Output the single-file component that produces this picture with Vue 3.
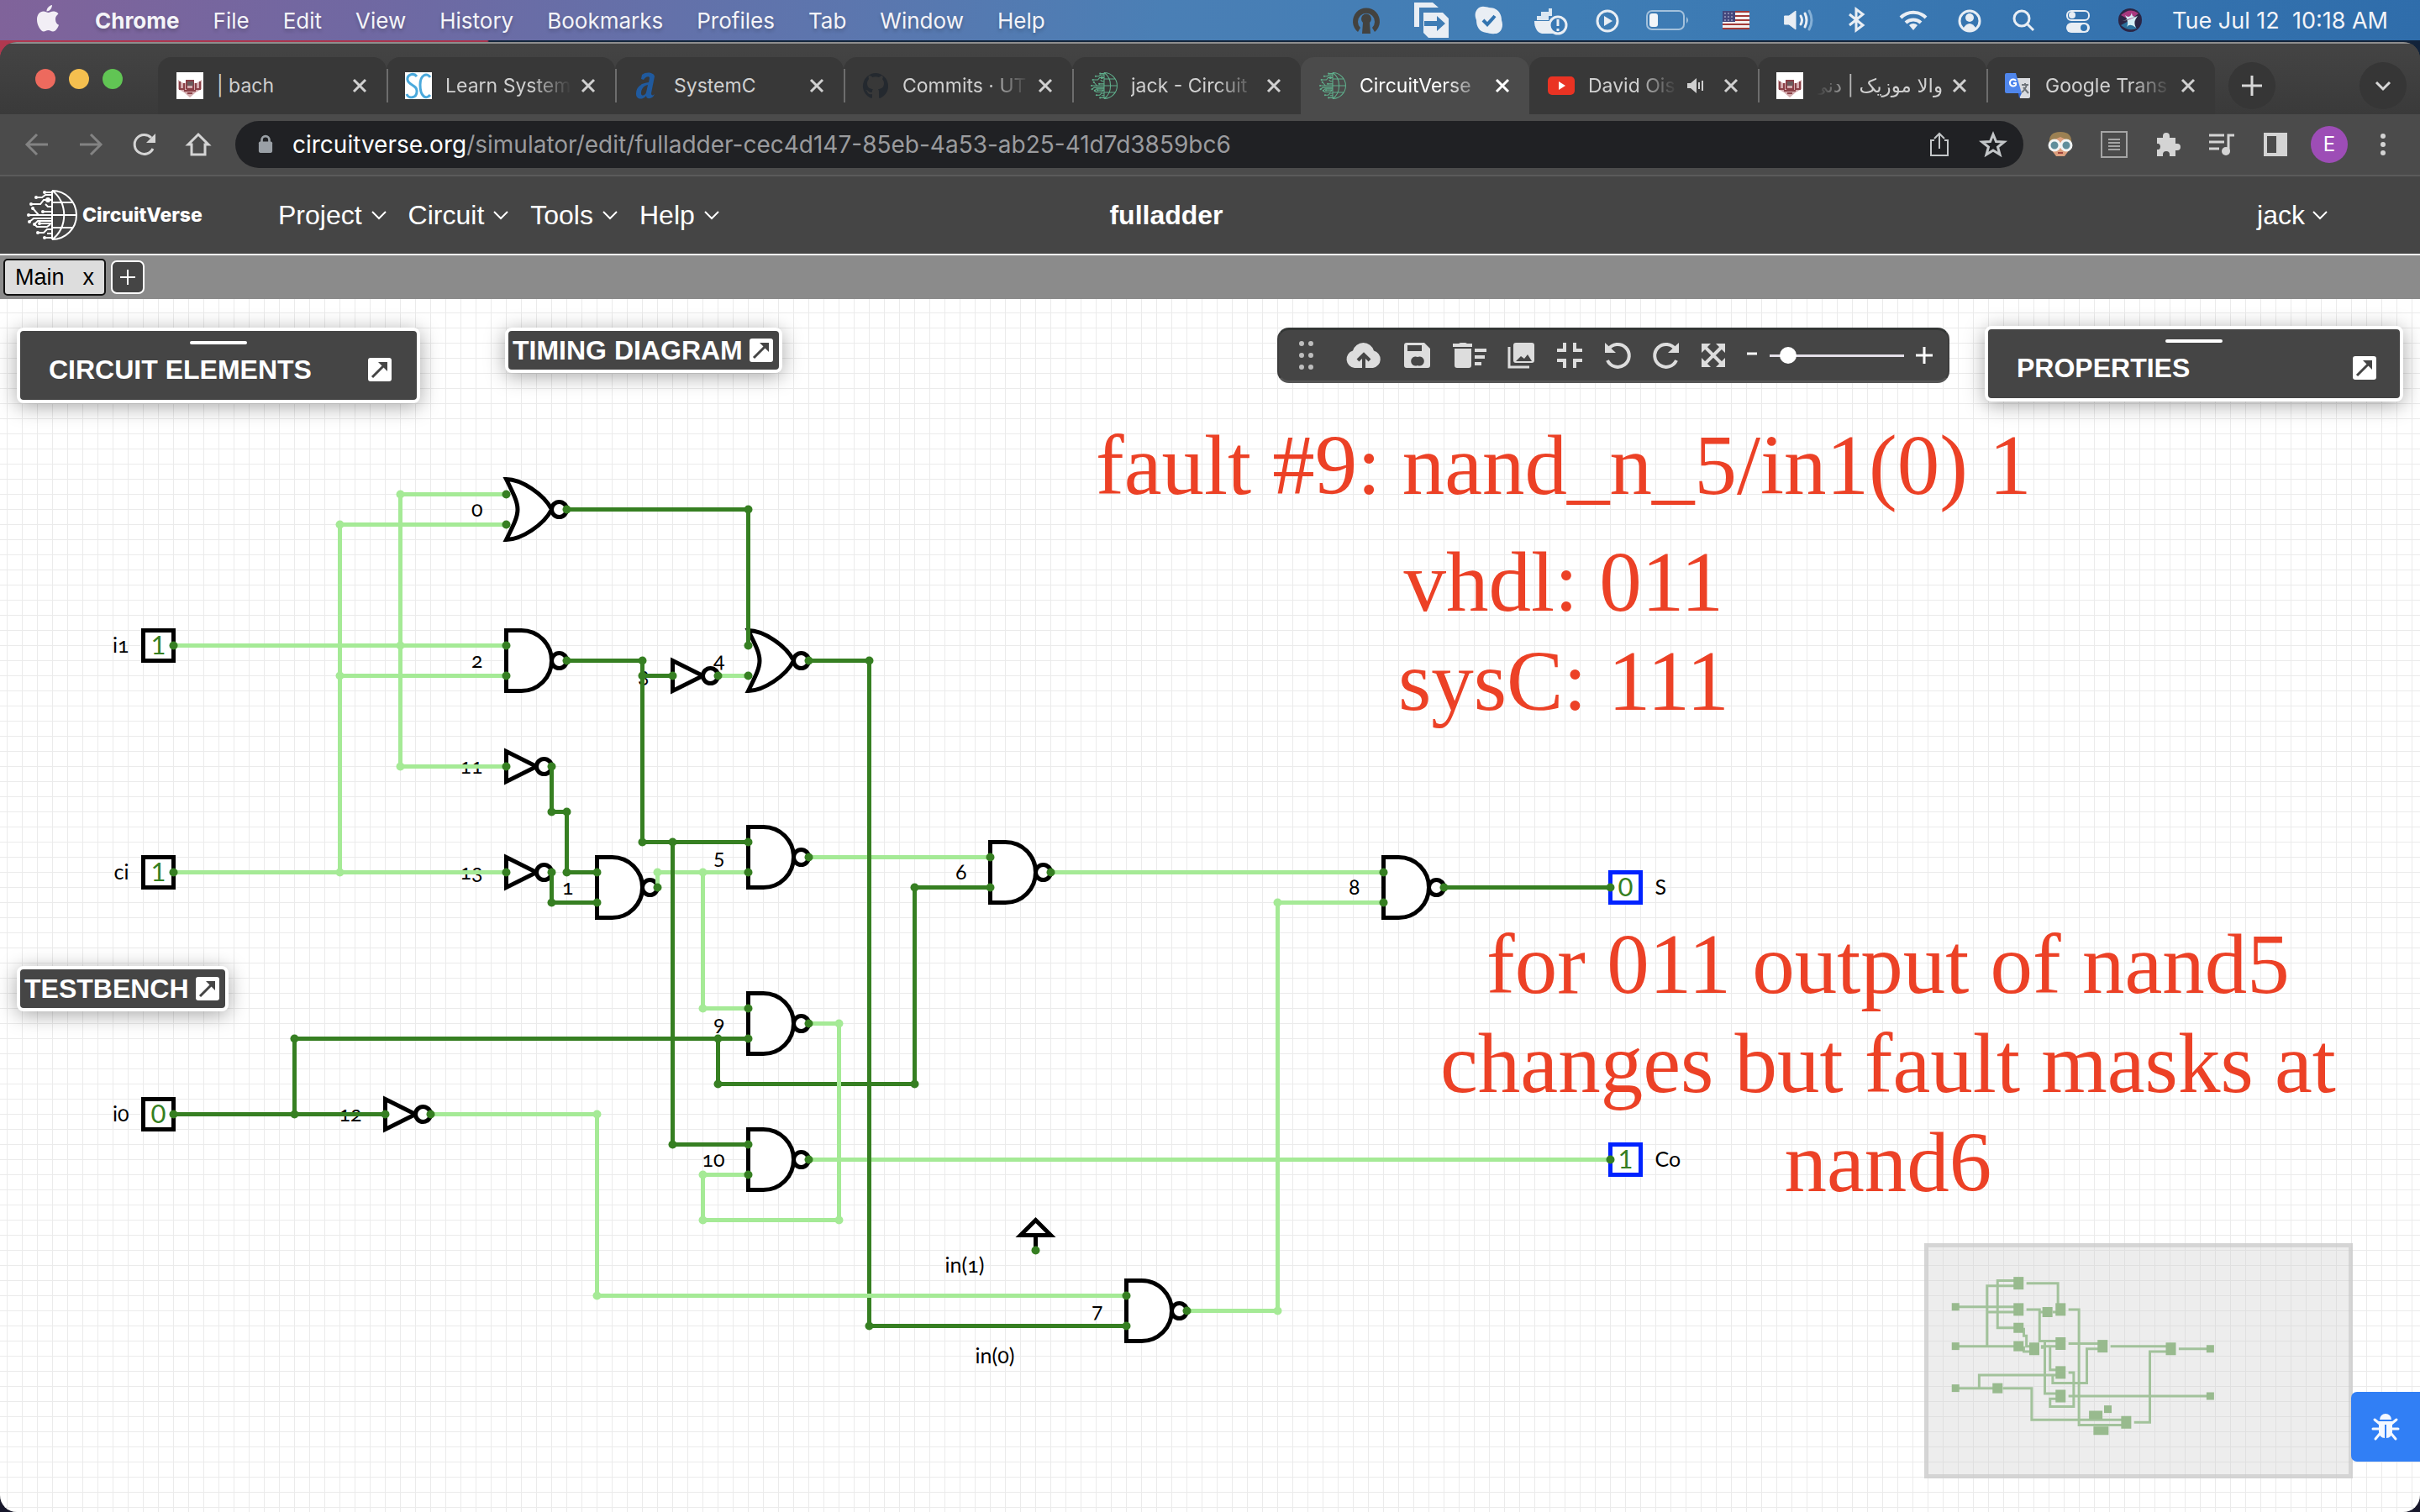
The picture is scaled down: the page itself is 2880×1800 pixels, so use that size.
<script setup>
const STEP = 18

const menus = ['File', 'Edit', 'View', 'History', 'Bookmarks', 'Profiles', 'Tab', 'Window', 'Help']

const tabs = [
  { title: '| bach', icon: 'bach' },
  { title: 'Learn System', icon: 'sc', line: true, fade: true },
  { title: 'SystemC', icon: 'a', line: true },
  { title: 'Commits · UT', icon: 'github', line: true, fade: true },
  { title: 'jack - Circuit', icon: 'globe', line: true, fade: true },
  { title: 'CircuitVerse', icon: 'globe', active: true, fade: true },
  { title: 'David Ois', icon: 'youtube', audio: true, fade: true },
  { title: 'والا موزیک | دنی', icon: 'bach', rtl: true, line: true, fade: true },
  { title: 'Google Trans', icon: 'translate', line: true, fade: true },
]

const nav = ['Project', 'Circuit', 'Tools', 'Help']

// All circuit coordinates are grid cells; x is the column of the input pins.
const gates = [
  { kind: 'nor', x: 33, y: 13, label: '0' },
  { kind: 'nand', x: 33, y: 23, label: '2' },
  { kind: 'not', x: 44, y: 24, label: '3' },
  { kind: 'nor', x: 49, y: 23, label: '4' },
  { kind: 'not', x: 33, y: 30, label: '11' },
  { kind: 'not', x: 33, y: 37, label: '13' },
  { kind: 'nand', x: 39, y: 38, label: '1' },
  { kind: 'nand', x: 49, y: 36, label: '5' },
  { kind: 'nand', x: 65, y: 37, label: '6' },
  { kind: 'nand', x: 91, y: 38, label: '8' },
  { kind: 'nand', x: 49, y: 47, label: '9' },
  { kind: 'not', x: 25, y: 53, label: '12' },
  { kind: 'nand', x: 49, y: 56, label: '10' },
  { kind: 'nand', x: 74, y: 66, label: '7' },
]

const shapes = {
  nor: 'M0-36C18-36 45-18 54 0C45 18 18 36 0 36C18 0 18 0 0-36Z',
  nand: 'M0-36H18A36 36 0 0 1 18 36H0Z',
  not: 'M0-18L36 0L0 18Z',
}

const pins = [
  { x: 10, y: 22, value: '1', name: 'i1' },
  { x: 10, y: 37, value: '1', name: 'ci' },
  { x: 10, y: 53, value: '0', name: 'i0' },
  { x: 107, y: 38, value: '0', name: 'S', out: true },
  { x: 107, y: 56, value: '1', name: 'Co', out: true },
]

const notes = [
  { x: 62, y: 63, text: 'in(1)', cx: 63, w: 16 },
  { x: 64, y: 69, text: 'in(0)', cx: 65, w: 18 },
]

const wires = [
  { on: true, p: [[33, 12], [26, 12], [26, 30], [33, 30]] },
  { on: true, p: [[33, 14], [22, 14], [22, 37]] },
  { on: true, p: [[22, 24], [33, 24]] },
  { on: true, p: [[11, 22], [33, 22]] },
  { on: true, p: [[11, 37], [33, 37]] },
  { on: true, p: [[47, 24], [49, 24]] },
  { on: true, p: [[43, 38], [43, 37], [49, 37]] },
  { on: true, p: [[46, 37], [46, 46], [49, 46]] },
  { on: true, p: [[53, 36], [65, 36]] },
  { on: true, p: [[53, 56], [106, 56]] },
  { on: true, p: [[69, 37], [91, 37]] },
  { on: true, p: [[78, 66], [84, 66], [84, 39], [91, 39]] },
  { p: [[37, 13], [49, 13], [49, 22]] },
  { p: [[37, 23], [42, 23], [42, 35], [49, 35]] },
  { p: [[42, 24], [44, 24]] },
  { p: [[44, 35], [44, 55], [49, 55]] },
  { p: [[36, 30], [36, 33], [37, 33], [37, 37], [39, 37]] },
  { p: [[36, 37], [36, 39], [39, 39]] },
  { p: [[11, 53], [25, 53]] },
  { p: [[19, 53], [19, 48], [49, 48]] },
  { p: [[47, 48], [47, 51], [60, 51], [60, 38], [65, 38]] },
  { p: [[53, 23], [57, 23], [57, 67], [74, 67]] },
  { p: [[95, 38], [106, 38]] },
  { on: true, p: [[53, 47], [55, 47], [55, 60], [46, 60], [46, 57], [49, 57]] },
  { on: true, p: [[28, 53], [39, 53], [39, 65], [74, 65]] },
]

const joints = [
  ...[[26, 12], [22, 14], [26, 22], [22, 24], [26, 30], [22, 37], [43, 37], [46, 37], [46, 46], [84, 66], [84, 39],
    [55, 47], [55, 60], [46, 60], [46, 57], [39, 53], [39, 65]].map(([x, y]) => ({ x, y, on: true })),
  ...[[49, 13], [42, 23], [42, 24], [42, 35], [44, 35], [44, 55], [36, 33], [37, 33], [37, 37], [36, 39], [19, 53],
    [19, 48], [47, 48], [47, 51], [60, 51], [60, 38], [57, 23], [57, 67], [68, 62]].map(([x, y]) => ({ x, y })),
  ...gates.flatMap((g) =>
    g.kind === 'not'
      ? [{ x: g.x, y: g.y }, { x: g.x + 3, y: g.y }]
      : [{ x: g.x, y: g.y - 1 }, { x: g.x, y: g.y + 1 }, { x: g.x + 4, y: g.y }]),
  ...pins.map((p) => ({ x: p.out ? p.x - 1 : p.x + 1, y: p.y })),
]

const points = (w, s = STEP) => w.p.map(([x, y]) => `${x * s},${y * s}`).join(' ')
const MAP = 3.125
const blocks = [
  ...gates.map((g) => ({ x: g.x + 1, y: g.y, w: 12, h: g.kind === 'not' ? 12 : 15 })),
  ...pins.map((p) => ({ x: p.x, y: p.y, w: 9, h: 9 })),
  ...notes.map((n) => ({ x: n.cx + 0.4, y: n.y + 0.2, w: n.w, h: 10 })),
  { x: 68, y: 61, w: 9, h: 9 },
]
</script>

<template>
  <div class="desktop">
    <svg class="defs" aria-hidden="true">
      <symbol id="globe" viewBox="0 0 60 60">
        <g fill="none" stroke="currentColor" stroke-width="2">
          <path d="M30 1V59M30 1A29 29 0 0 1 30 59M30 1C49 14 49 46 30 59M30 15H54M30 30H59M30 45H54" />
          <path d="M22 3H30M11 9H18L22 6H30M5 17H16L20 12H30M7 22L14 30H30M2 30H14M19 26H30M22 17L25 20H30M3 38L8 34H30M9 41L13 37H30M15 40H30M13 51H20L24 47H30M9 41L12 44H24L28 41M21 57H30M24 52H30" />
        </g>
        <g fill="currentColor">
          <circle cx="21" cy="3" r="2" /><circle cx="11" cy="9" r="2" /><circle cx="5" cy="17" r="2" /><circle cx="7" cy="22" r="2" />
          <circle cx="2" cy="30" r="2" /><circle cx="3" cy="38" r="2" /><circle cx="9" cy="41" r="2" /><circle cx="15" cy="40" r="2" />
          <circle cx="13" cy="51" r="2" /><circle cx="21" cy="57" r="2" /><circle cx="19" cy="26" r="2" /><circle cx="25" cy="12" r="3" />
        </g>
      </symbol>
      <symbol id="expand" viewBox="0 0 28 28">
        <rect width="28" height="28" rx="3" fill="#fff" />
        <path d="M5 23L19 9" stroke="#454545" stroke-width="3" />
        <path d="M12 5H23V16Z" fill="#454545" />
      </symbol>
    </svg>

    <header class="menubar">
      <svg class="apple" width="28" height="34" viewBox="0 0 28 34" fill="#f2eef5">
        <path d="M19 1C19 5 16 8.500 12.500 8.500C12.300 5 15.500 1.500 19 1ZM23 18C23 14 26 12 26.500 11.500C24.500 8.700 21.500 8.500 20.500 8.500C18 8.500 16 10 14.500 10C13 10 11 8.600 8.700 8.600C4.500 8.700 1 12 1 18.500C1 25 5.500 32.500 9 32.500C11 32.500 12 31 14.500 31C17 31 17.800 32.500 20 32.500C23.500 32.500 26.300 27 27 24.700C24.500 23.600 23 21.500 23 18Z" />
      </svg>
      <button class="menu app">Chrome</button>
      <button v-for="m in menus" :key="m" class="menu">{{ m }}</button>
      <div class="status">
        <svg width="60" height="40" viewBox="-30 -20 60 40">
          <path d="M-10 14A16 16 0 1 1 10 14L7 9A10 10 0 1 0-7 9Z" fill="#43423f" />
          <path d="M-4 3A6 6 0 1 1 4 3L5 16H-5Z" fill="#43423f" />
        </svg>
        <svg width="38" height="40" viewBox="-19 -20 38 40">
          <path d="M-20-21H2L9-15H-14V8H-20Z" fill="#e9eef4" />
          <path d="M-9-9H14L21-2V21H-3L-9 15Z" fill="#e9eef4" />
          <path d="M-8 1H7V-5L17 4L7 13V7H-8Z" fill="#3f7db5" />
        </svg>
        <svg width="44" height="40" viewBox="-22 -20 44 40">
          <path d="M-14-13C-10-18-4-16 0-15C10-15 15-8 15 0C18 8 14 16 7 16C2 17 0 15-3 15C-12 14-15 7-15 0C-17-5-17-9-14-13Z" fill="#e9eef4" />
          <path d="M-7 0L-2 5L7-5" stroke="#3274b0" stroke-width="4" fill="none" />
        </svg>
        <svg width="46" height="40" viewBox="-23 -20 46 40">
          <path d="M-19 1H9V10L4 16H-10C-16 15-19 8-19 1Z" fill="#e9eef4" />
          <path d="M-16-5H-2V0H-16ZM-11-10H2V-5H-11ZM-2-14H2V-10H-2Z" fill="#dbe7f2" />
          <circle cx="9" cy="6" r="10" fill="#3a79b4" stroke="#e9eef4" stroke-width="3" />
          <path d="M9-1V7M9 10V13" stroke="#e9eef4" stroke-width="3" />
        </svg>
        <svg width="34" height="40" viewBox="-17 -20 34 40">
          <circle r="12" cy="1" fill="none" stroke="#e9eef4" stroke-width="3" /><path d="M-4-5L6 1L-4 7Z" fill="#e9eef4" />
        </svg>
        <svg width="54" height="40" viewBox="-27 -20 54 40">
          <rect x="-25" y="-11" width="44" height="22" rx="6" fill="none" stroke="#a3c1dc" stroke-width="2" />
          <rect x="-22" y="-8" width="10" height="16" rx="3" fill="#f2f5f8" /><path d="M22-4Q26 0 22 4Z" fill="#a3c1dc" />
        </svg>
        <svg width="52" height="40" viewBox="-26 -20 52 40">
          <rect x="-16" y="-11" width="32" height="22" fill="#f4f1f0" />
          <path d="M-16-10H16M-16-5H16M-16 0H16M-16 5H16M-16 10H16" stroke="#a13a38" stroke-width="2" />
          <rect x="-16" y="-11" width="15" height="13" fill="#44477c" />
          <path d="M-14-8H-2M-14-4H-2M-14 0H-2" stroke="#c8cbe0" stroke-dasharray="2 2" />
        </svg>
        <svg width="42" height="40" viewBox="-21 -20 42 40" fill="none" stroke-width="3" stroke-linecap="round">
          <path d="M-17-5H-12L-4-11V11L-12 5H-17Z" fill="#e9eef4" stroke="#e9eef4" stroke-width="1" />
          <path d="M2-5Q5 0 2 5M7-8Q11 0 7 8" stroke="#e9eef4" /><path d="M12-11Q18 0 12 11" stroke="#85b0d6" />
        </svg>
        <svg width="38" height="40" viewBox="-19 -20 38 40" fill="none" stroke="#e9eef4" stroke-width="3">
          <path d="M-8-7L8 6L0 12V-13L8-7L-8 6" />
        </svg>
        <svg width="42" height="40" viewBox="-21 -20 42 40" fill="none" stroke="#e9eef4" stroke-width="4">
          <path d="M-15-3A21 21 0 0 1 15-3M-9 3A13 13 0 0 1 9 3" /><path d="M-5 6A7 7 0 0 1 5 6L0 12Z" fill="#e9eef4" stroke="none" />
        </svg>
        <svg width="36" height="40" viewBox="-18 -20 36 40">
          <circle r="12" cy="1" fill="none" stroke="#e9eef4" stroke-width="3" /><circle r="5" cy="-3" fill="#e9eef4" />
          <path d="M-8 10Q0-2 8 10Q0 15-8 10Z" fill="#e9eef4" />
        </svg>
        <svg width="36" height="40" viewBox="-18 -20 36 40" fill="none" stroke="#e9eef4" stroke-width="3">
          <circle r="9" cx="-2" cy="-2" /><path d="M5 5L12 12" />
        </svg>
        <svg width="38" height="40" viewBox="-19 -20 38 40">
          <rect x="-13" y="-11" width="26" height="11" rx="5" fill="none" stroke="#e9eef4" stroke-width="2" /><circle cx="-7" cy="-6" r="4" fill="#e9eef4" />
          <rect x="-14" y="3" width="28" height="12" rx="6" fill="#e9eef4" /><circle cx="7" cy="9" r="4" fill="#3274b0" />
        </svg>
        <svg width="30" height="40" viewBox="-15 -20 30 40">
          <circle r="14" fill="#2b2545" /><path d="M-11-6Q0-16 10-8L0 0Z" fill="#a8377f" /><path d="M-11 6Q-2 14 8 10L0 0Z" fill="#2a6f9c" />
          <path d="M-9 1Q0 0 9-5Q3 2 7 9Q0 3-4 8Q-1 2-6-6Q0-1 2-9Q2-2 9-5" fill="#d5eef5" />
        </svg>
      </div>
      <time class="clock">Tue Jul 12&nbsp; 10:18 AM</time>
    </header>

    <div class="window">
      <div class="tabstrip">
        <div class="lights"><i class="red"></i><i class="yellow"></i><i class="green"></i></div>
        <div v-for="(t, i) in tabs" :key="i" class="tab" :class="{ active: t.active, line: t.line }">
          <svg width="32" height="32" viewBox="0 0 32 32" :class="['fav', t.icon]">
            <use v-if="t.icon === 'globe'" href="#globe" />
            <g v-else-if="t.icon === 'bach'">
              <rect width="32" height="32" fill="#fff" /><path d="M2 9L8 13H24L30 9V20L23 24L16 30L9 24L2 20Z" fill="#d3abae" />
              <path d="M4 11V20H9V13M12 20V10H20V20H12M28 11V20H23V13M9 22H23M13 25H19" fill="none" stroke="#8a4047" stroke-width="2" />
              <rect x="13" y="11" width="7" height="5" fill="#6b5a5c" />
            </g>
            <g v-else-if="t.icon === 'sc'" fill="none" stroke="#4aa9dc" stroke-width="3">
              <rect width="32" height="32" fill="#fff" stroke="none" /><path d="M14 5C10 0 2 3 3 9C4 16 15 15 14 23C14 31 4 32 2 26M30 6C26 0 18 3 18 15C18 29 25 33 30 27" />
            </g>
            <path v-else-if="t.icon === 'a'" d="M10 3C15-1 24 0 25 5L21 25C21 28 23 28 25 26C23 32 15 33 15 28C10 34 3 32 3 26C3 17 9 13 18 12L19 7C19 4 14 5 12 9L9 8ZM17 15C12 16 9 20 9 25C9 29 14 28 15 24Z" fill="#205a9e" />
            <path v-else-if="t.icon === 'github'" d="M16 1A15.500 15.500 0 0 0 11 31C12 31 12 30 12 29V26C8 27 7 25 6 23C5 21 3 21 5 21C7 21 8 24 10 24C11 24 12 24 12 23C12 22 12 21 13 20C9 20 6 18 6 13C6 11 7 9 8 8C7 6 8 4 8 4C10 4 12 5 12 6C15 5 17 5 20 6C21 5 23 4 24 4C25 6 25 7 24 8C25 9 26 11 26 13C26 18 23 20 19 20C20 21 20 23 20 24V29C20 30 20 31 21 31A15.500 15.500 0 0 0 16 1Z" fill="#24292f" />
            <g v-else-if="t.icon === 'youtube'"><rect y="5" width="32" height="22" rx="5" fill="#ea3323" /><path d="M13 11L21 16L13 21Z" fill="#fff" /></g>
            <g v-else><path d="M13 7H30V29Q30 31 28 31H18Z" fill="#dadce0" /><path d="M0 3Q0 1 2 1H13L20 25H2Q0 25 0 23Z" fill="#4f86ec" /><path d="M16 25H20L17 31Z" fill="#3367d6" />
              <path d="M13 10A4 4 0 1 0 13 15V13H10" stroke="#fff" stroke-width="2" fill="none" /><path d="M20 15H28M24 13V15M26 15Q24 21 20 24M22 18L28 25" stroke="#70757a" stroke-width="2" fill="none" /></g>
          </svg>
          <span class="title" :class="{ fade: t.fade }" :dir="t.rtl ? 'rtl' : 'ltr'">{{ t.title }}</span>
          <svg v-if="t.audio" class="audio" width="20" height="20" viewBox="0 0 20 20" fill="#d0d0d0"><path d="M0 7H4L11 1V19L4 13H0ZM13 6H15V14H13ZM17 4H19V16H17Z" /></svg>
          <button class="x" aria-label="Close tab"><svg width="16" height="16" viewBox="0 0 16 16"><path d="M1 1L15 15M15 1L1 15" stroke="currentColor" stroke-width="3" /></svg></button>
        </div>
        <button class="round add" aria-label="New tab"><svg width="24" height="24" viewBox="0 0 24 24"><path d="M12 0V24M0 12H24" stroke="#d8d8d8" stroke-width="3" /></svg></button>
        <button class="round search" aria-label="Search tabs"><svg width="18" height="12" viewBox="0 0 18 12"><path d="M1 2L9 10L17 2" fill="none" stroke="#d8d8d8" stroke-width="3" /></svg></button>
      </div>

      <div class="toolbar">
        <button class="tool" aria-label="Back"><svg width="28" height="28" viewBox="0 0 28 28"><path d="M27 14H3M14 2L2 14L14 26" fill="none" stroke="#838383" stroke-width="3" /></svg></button>
        <button class="tool" aria-label="Forward"><svg width="28" height="28" viewBox="0 0 28 28"><path d="M1 14H25M14 2L26 14L14 26" fill="none" stroke="#838383" stroke-width="3" /></svg></button>
        <button class="tool" aria-label="Reload"><svg width="28" height="28" viewBox="0 0 28 28"><path d="M24 19A11.500 11.500 0 1 1 22 6" fill="none" stroke="#d4d4d4" stroke-width="3" /><path d="M27 1V12H16Z" fill="#d4d4d4" /></svg></button>
        <button class="tool" aria-label="Home"><svg width="28" height="28" viewBox="0 0 28 28"><path d="M2 14L14 2L26 14H22V26H6V14Z" fill="none" stroke="#d4d4d4" stroke-width="3" /></svg></button>
        <div class="url">
          <svg width="18" height="24" viewBox="0 0 20 24"><rect x="1" y="8" width="18" height="15" rx="2" fill="#9aa0a6" /><path d="M5 9V6A5 5 0 0 1 15 6V9" fill="none" stroke="#9aa0a6" stroke-width="3" /></svg>
          <a class="address" href="#"><b>circuitverse.org</b>/simulator/edit/fulladder-cec4d147-85eb-4a53-ab25-41d7d3859bc6</a>
          <button class="tool" aria-label="Share"><svg width="28" height="30" viewBox="0 0 28 30" fill="none" stroke="#c4c7c9" stroke-width="2"><path d="M8 10H4V28H24V10H20M14 20V2M8 8L14 2L20 8" /></svg></button>
          <button class="tool" aria-label="Bookmark"><svg width="30" height="30" viewBox="0 0 30 30" fill="none" stroke="#c4c7c9" stroke-width="3"><path d="M15 3L18.500 11.500L28 12L20.500 18L23 27L15 22L7 27L9.500 18L2 12L11.500 11.500Z" /></svg></button>
        </div>
        <button class="tool first" aria-label="Extension"><svg width="30" height="32" viewBox="0 0 30 32"><path d="M2 16Q0 1 15 1Q30 1 28 16Z" fill="#9b8053" /><path d="M4 12L15 7L26 12V22L20 30H10L4 22Z" fill="#dda07e" /><circle cx="8" cy="17" r="6" fill="#5f8e9b" stroke="#f1f4f4" stroke-width="3" /><circle cx="22" cy="17" r="6" fill="#5f8e9b" stroke="#f1f4f4" stroke-width="3" /><path d="M12 26H18" stroke="#a0443c" stroke-width="2" /></svg></button>
        <button class="tool" aria-label="Reader"><svg width="32" height="32" viewBox="0 0 32 32" fill="none" stroke="#a5a5a5" stroke-width="2"><path d="M1 1H31V31H1ZM9 10H23M9 14H23M9 18H23M9 22H23" /></svg></button>
        <button class="tool" aria-label="Extensions"><svg width="30" height="30" viewBox="0 0 30 30" fill="#d4d4d4"><path d="M2 7H9V5A4 4 0 0 1 17 5V7H24V14H26A4 4 0 0 1 26 22H24V29H17V27A4 4 0 0 0 9 27V29H2V21H4A4 4 0 0 0 4 14H2Z" /></svg></button>
        <button class="tool" aria-label="Media"><svg width="30" height="28" viewBox="0 0 30 28"><path d="M0 3H18M0 11H18M0 19H12M23 22V3H30" fill="none" stroke="#d4d4d4" stroke-width="3" /><circle cx="20" cy="22" r="5" fill="#d4d4d4" /></svg></button>
        <button class="tool" aria-label="Side panel"><svg width="28" height="28" viewBox="0 0 28 28"><path d="M0 0H28V28H0ZM4 4V24H15V4Z" fill="#d4d4d4" fill-rule="evenodd" /></svg></button>
        <button class="tool" aria-label="Account"><span class="avatar">E</span></button>
        <button class="tool" aria-label="More"><svg width="6" height="28" viewBox="0 0 6 28" fill="#d4d4d4"><circle cx="3" cy="4" r="3" /><circle cx="3" cy="14" r="3" /><circle cx="3" cy="24" r="3" /></svg></button>
      </div>

      <nav class="appbar">
        <a class="brand" href="#"><svg width="60" height="62"><use href="#globe" /></svg><span>CircuitVerse</span></a>
        <ul class="nav">
          <li v-for="n in nav" :key="n"><button>{{ n }}<svg width="18" height="12" viewBox="0 0 18 12"><path d="M1 2L9 10L17 2" fill="none" stroke="#fff" stroke-width="2" /></svg></button></li>
        </ul>
        <h1>fulladder</h1>
        <button class="user">jack<svg width="18" height="12" viewBox="0 0 18 12"><path d="M1 2L9 10L17 2" fill="none" stroke="#fff" stroke-width="2" /></svg></button>
      </nav>

      <div class="circuits">
        <button class="circuit">Main<span>x</span></button>
        <button class="plus" aria-label="Add circuit"><svg width="18" height="18" viewBox="0 0 18 18"><path d="M9 0V18M0 9H18" stroke="#fff" stroke-width="2" /></svg></button>
      </div>

      <main class="stage">
        <svg class="circuit-canvas">
          <g transform="translate(8.500 16.500)">
            <g class="gates">
              <g v-for="g in gates" :key="g.label" :transform="`translate(${g.x * STEP} ${g.y * STEP})`">
                <path :d="shapes[g.kind]" />
                <circle :cx="g.kind === 'not' ? 45 : 63" r="9" />
                <text x="-28" y="8" class="end">{{ g.label }}</text>
              </g>
              <g v-for="p in pins" :key="p.name" :transform="`translate(${p.x * STEP} ${p.y * STEP})`">
                <rect x="-18" y="-18" width="36" height="36" :class="{ out: p.out }" />
                <text y="10" class="value">{{ p.value }}</text>
                <text :x="p.out ? 35 : -35" y="8" :class="{ end: !p.out }">{{ p.name }}</text>
              </g>
              <text v-for="n in notes" :key="n.text" :x="n.x * STEP" :y="n.y * STEP + 8">{{ n.text }}</text>
              <path d="M1224 1080L1206 1098H1242ZM1224 1098V1116" />
            </g>
            <polyline v-for="(w, i) in wires" :key="i" class="wire" :class="{ on: w.on }" :points="points(w)" />
            <circle v-for="(j, i) in joints" :key="'j' + i" class="joint" :class="{ on: j.on }" :cx="j.x * STEP" :cy="j.y * STEP" r="5" />
          </g>
        </svg>

        <section class="panel elements">
          <i class="grip"></i>
          <h2>CIRCUIT ELEMENTS</h2>
          <button aria-label="Expand circuit elements"><svg width="28" height="28"><use href="#expand" /></svg></button>
        </section>
        <section class="panel small timing">
          <h2>TIMING DIAGRAM</h2>
          <button aria-label="Expand timing diagram"><svg width="28" height="28"><use href="#expand" /></svg></button>
        </section>
        <section class="panel small testbench">
          <h2>TESTBENCH</h2>
          <button aria-label="Expand testbench"><svg width="28" height="28"><use href="#expand" /></svg></button>
        </section>
        <section class="panel properties">
          <i class="grip"></i>
          <h2>PROPERTIES</h2>
          <button aria-label="Expand properties"><svg width="28" height="28"><use href="#expand" /></svg></button>
        </section>

        <div class="quick">
          <svg class="dots" width="16" height="34" viewBox="0 0 16 34" fill="#bdbdbd"><circle cx="3" cy="3" r="3" /><circle cx="14" cy="3" r="3" /><circle cx="3" cy="17" r="3" /><circle cx="14" cy="17" r="3" /><circle cx="3" cy="31" r="3" /><circle cx="14" cy="31" r="3" /></svg>
          <button aria-label="Save online"><svg width="44" height="30" viewBox="0 0 44 30" fill="#ddd"><path d="M11 30A10.500 10.500 0 0 1 9 9.500A13 13 0 0 1 34 9.500A10.500 10.500 0 0 1 33 30Z" /><path d="M22 30V15M15 21L22 14L29 21" fill="none" stroke="#454545" stroke-width="4" /></svg></button>
          <button aria-label="Save offline"><svg width="32" height="30" viewBox="0 0 32 30"><path d="M3 0H24L31 7V27Q31 30 28 30H3Q0 30 0 27V3Q0 0 3 0ZM4 3V10H21V3ZM16 17A5.500 5.500 0 1 0 16 27A5.500 5.500 0 1 0 16 17Z" fill="#ddd" fill-rule="evenodd" /></svg></button>
          <button aria-label="Delete selected"><svg width="40" height="30" viewBox="0 0 40 30" fill="#ddd"><path d="M0 1H7L9 0H15L17 1H23V5H0ZM2 7H22V27Q22 30 19 30H5Q2 30 2 27ZM26 7H40V11H26ZM26 15H38V19H26ZM26 23H34V27H26Z" /></svg></button>
          <button aria-label="Download image"><svg width="32" height="30" viewBox="0 0 32 30" fill="#ddd"><path d="M9 0H28Q31 0 31 3V21Q31 24 28 24H9Q6 24 6 21V3Q6 0 9 0ZM9 22H28L23 14L19 19L15 16Z" fill-rule="evenodd" /><path d="M1 5V29H25" fill="none" stroke="#ddd" stroke-width="3" /></svg></button>
          <button aria-label="Fit to screen"><svg width="30" height="30" viewBox="0 0 30 30"><path d="M9 0V9H0M21 0V9H30M9 30V21H0M21 30V21H30" fill="none" stroke="#ddd" stroke-width="4" /></svg></button>
          <button aria-label="Undo"><svg width="32" height="32" viewBox="0 0 32 32"><path d="M5 9A13.500 13.500 0 1 1 4 22" fill="none" stroke="#ddd" stroke-width="4" /><path d="M1 1V13H14Z" fill="#ddd" /></svg></button>
          <button aria-label="Redo"><svg width="32" height="32" viewBox="0 0 32 32"><path d="M27 9A13.500 13.500 0 1 0 28 22" fill="none" stroke="#ddd" stroke-width="4" /><path d="M31 1V13H18Z" fill="#ddd" /></svg></button>
          <button aria-label="Full view"><svg width="28" height="28" viewBox="0 0 28 28" fill="#ddd"><path d="M3 3L25 25M25 3L3 25" stroke="#ddd" stroke-width="4" /><path d="M0 0H11L0 11ZM28 0H17L28 11ZM0 28H11L0 17ZM28 28H17L28 17Z" /></svg></button>
          <div class="zoom">
            <button class="minus" aria-label="Zoom out"><svg width="12" height="20" viewBox="0 0 12 20"><path d="M0 8H12" stroke="#fff" stroke-width="3" /></svg></button>
            <input type="range" min="0" max="100" value="9" aria-label="Zoom" />
            <button aria-label="Zoom in"><svg width="20" height="20" viewBox="0 0 20 20"><path d="M10 0V20M0 10H20" stroke="#fff" stroke-width="3" /></svg></button>
          </div>
        </div>

        <div class="remark top"><p class="gap">fault #9: nand_n_5/in1(0) 1</p><p>vhdl: 011</p><p>sysC: 111</p></div>
        <div class="remark low"><p>for 011 output of nand5</p><p>changes but fault masks at</p><p>nand6</p></div>

        <svg class="minimap" width="510" height="280">
          <g transform="translate(1 2)">
            <polyline v-for="(w, i) in wires" :key="i" :points="points(w, MAP)" />
            <rect v-for="(b, i) in blocks" :key="'b' + i" :x="b.x * MAP - b.w / 2" :y="b.y * MAP - b.h / 2" :width="b.w" :height="b.h" />
          </g>
        </svg>
        <button class="bug" aria-label="Report issue">
          <svg width="32" height="32" viewBox="0 0 32 32" fill="#f4f8ff"><path d="M9 7A7 7 0 0 1 23 7Z" /><path d="M8 9H24V22Q23 29 17 29V13H15V29Q9 29 8 22Z" /><path d="M9 12L3 7M9 18H1M9 24L4 30M23 12L29 7M23 18H31M23 24L28 30" stroke="#f4f8ff" stroke-width="3" stroke-linecap="round" /></svg>
        </button>
      </main>
    </div>
  </div>
</template>

<style>
body {
  margin: 0;
  background: #17172b;
}
</style>

<style scoped>
* {
  box-sizing: border-box;
}
button {
  display: flex;
  align-items: center;
  padding: 0;
  border: 0;
  background: none;
  color: inherit;
  font: inherit;
}
svg {
  flex: none;
  display: block;
  overflow: visible;
}
.defs {
  position: absolute;
  width: 0;
  height: 0;
}
.desktop {
  display: flex;
  flex-direction: column;
  min-height: 100vh;
  font-family: Inter, "Liberation Sans", sans-serif;
  background: linear-gradient(90deg, #b0384f 0, #a8344c 580px, #14263c 582px, #12233a 100%) 0 0 / 100% 80px no-repeat, #17172b;
}
.menubar {
  display: flex;
  align-items: center;
  height: 48px;
  padding: 0 38px 0 43px;
  font-size: 26px;
  color: #f4f4f8;
  background: linear-gradient(100deg, #80639a 0, #7068a2 15%, #5c76ae 35%, #4a7fb5 48%, #3f7db5 65%, #2f6dab 100%);
}
.apple {
  margin-right: 42px;
  margin-bottom: 4px;
}
.menu {
  margin-right: 40px;
  text-shadow: 0 3px 4px #0003;
}
.app {
  font-weight: 700;
}
.status {
  display: flex;
  gap: 28px;
  margin-left: auto;
}
.clock {
  width: 260px;
  margin-left: 32px;
  font-size: 27px;
  text-align: right;
  white-space: nowrap;
}
.window {
  display: flex;
  flex-direction: column;
  flex: 1;
  margin-top: 2px;
  border-radius: 20px;
  overflow: hidden;
  background: #454545;
}
.tabstrip {
  display: flex;
  align-items: flex-end;
  height: 86px;
  border-top: 2px solid #8e8e8e;
  background: linear-gradient(#444, #3a3a3a);
}
.lights {
  display: flex;
  gap: 16px;
  width: 188px;
  padding: 0 0 30px 42px;
}
.lights i {
  width: 24px;
  height: 24px;
  border-radius: 50%;
}
.red { background: #ed6a5e; }
.yellow { background: #f5bf4f; }
.green { background: #61c554; }
.tab {
  position: relative;
  display: flex;
  align-items: center;
  gap: 16px;
  width: 272px;
  height: 68px;
  padding: 0 24px 0 22px;
  border-radius: 16px 16px 0 0;
  background: #383838;
  color: #d0d0d0;
  font-size: 24px;
}
.tab.line::before {
  content: "";
  position: absolute;
  left: 0;
  top: 14px;
  width: 2px;
  height: 40px;
  background: #6d6d6d;
}
.tab.active {
  background: #4b4b4b;
  color: #fff;
}
.title {
  flex: 1;
  min-width: 0;
  margin-right: -4px;
  overflow: hidden;
  white-space: nowrap;
  line-height: 36px;
  font-size: 23px;
  font-family: Inter, "DejaVu Sans", sans-serif;
}
.fade {
  mask-image: linear-gradient(90deg, #000 calc(100% - 48px), transparent);
}
.fade[dir="rtl"] {
  mask-image: linear-gradient(270deg, #000 calc(100% - 48px), transparent);
}
.audio {
  margin-right: 8px;
}
.fav.globe {
  color: #5fae8b;
}
.round {
  justify-content: center;
  width: 56px;
  height: 56px;
  margin-bottom: 6px;
  border-radius: 50%;
  background: #363636;
}
.add {
  margin-left: 16px;
}
.search {
  margin-left: auto;
  margin-right: 16px;
}
.toolbar {
  display: flex;
  align-items: center;
  height: 74px;
  padding: 0 12px;
  border-bottom: 2px solid #5b5b5b;
  background: #4b4b4b;
}
.tool {
  justify-content: center;
  width: 64px;
  height: 56px;
}
.url {
  display: flex;
  align-items: center;
  flex: 1;
  height: 56px;
  margin-left: 12px;
  padding: 0 4px 0 27px;
  border-radius: 28px;
  background: #202124;
}
.address {
  flex: 1;
  margin-left: 23px;
  font-size: 28px;
  color: #9a9b9e;
  text-decoration: none;
  white-space: nowrap;
}
.address b {
  font-weight: 400;
  color: #fff;
}
.first {
  margin-left: 12px;
}
.avatar {
  width: 44px;
  border-radius: 50%;
  background: #9d4db6;
  color: #fff;
  font-size: 24px;
  line-height: 44px;
  text-align: center;
}
.appbar {
  position: relative;
  display: flex;
  align-items: center;
  height: 94px;
  padding: 0 110px 0 32px;
  border-bottom: 2px solid #fff;
  background: #454545;
  color: #fff;
  font: 32px "Liberation Sans", Arial, sans-serif;
}
.brand {
  display: flex;
  align-items: center;
  gap: 6px;
  width: 299px;
  color: #fff;
  text-decoration: none;
  font: 800 23px Inter, sans-serif;
}
.nav {
  display: flex;
  gap: 26px;
  margin: 0;
  padding: 0;
  list-style: none;
}
.nav button {
  gap: 11px;
}
.appbar h1 {
  position: absolute;
  left: 0;
  right: 0;
  margin: 0 104px 0 0;
  text-align: center;
  font-size: 32px;
  pointer-events: none;
}
.user {
  gap: 9px;
  margin-left: auto;
}
.circuits {
  display: flex;
  align-items: center;
  gap: 6px;
  height: 52px;
  padding: 0 4px;
  background: #8b8b8b;
  font: 27px "Liberation Sans", Arial, sans-serif;
}
.circuit {
  justify-content: space-between;
  width: 122px;
  height: 44px;
  padding: 0 12px;
  border: 2px solid #111;
  border-radius: 5px;
  background: #ddd;
  color: #000;
}
.plus {
  justify-content: center;
  width: 40px;
  height: 40px;
  border: 2px solid #fff;
  border-radius: 7px;
  background: #454545;
}
.stage {
  position: relative;
  flex: 1;
  min-height: 1444px;
  overflow: hidden;
  background:
    linear-gradient(90deg, #ebebeb 1px, transparent 1px) 8px 16px / 18px 18px,
    linear-gradient(#ebebeb 1px, transparent 1px) 8px 16px / 18px 18px,
    #fff;
}
.circuit-canvas {
  position: absolute;
  inset: 0;
  width: 100%;
  height: 100%;
}
.gates path,
.gates circle,
.gates rect {
  fill: #fff;
  stroke: #000;
  stroke-width: 5px;
}
.gates rect.out {
  stroke: #0022ff;
}
.gates text {
  font: 25px Lato, sans-serif;
  font-variant-numeric: oldstyle-nums;
}
.gates .end {
  text-anchor: end;
}
.gates text.value {
  fill: #367f22;
  text-anchor: middle;
  font-size: 31px;
  font-variant-numeric: normal;
}
.wire {
  fill: none;
  stroke: #367f22;
  stroke-width: 5px;
}
.wire.on {
  stroke: #a5ea96;
}
.joint {
  fill: #367f22;
}
.joint.on {
  fill: #a5ea96;
}
.panel {
  position: absolute;
  display: flex;
  align-items: center;
  justify-content: space-between;
  height: 90px;
  padding: 10px 28px 0 34px;
  border: 4px solid #fff;
  border-radius: 8px;
  background: #454545;
  box-shadow: 0 4px 24px #00000059;
  color: #fff;
}
.panel h2 {
  margin: 0;
  font: bold 32px "Liberation Sans", Arial, sans-serif;
  white-space: nowrap;
}
.grip {
  position: absolute;
  top: 12px;
  left: calc(50% - 34px);
  width: 68px;
  height: 4px;
  border-radius: 2px;
  background: #fff;
}
.panel.small {
  height: 54px;
  gap: 8px;
  padding: 0 7px 0 5px;
}
.panel.elements {
  left: 20px;
  top: 34px;
  width: 480px;
  padding-right: 30px;
}
.timing {
  left: 601px;
  top: 34px;
}
.testbench {
  left: 20px;
  top: 794px;
}
.properties {
  right: 20px;
  top: 32px;
  width: 498px;
}
.quick {
  position: absolute;
  top: 34px;
  right: 560px;
  display: flex;
  align-items: center;
  gap: 26px;
  width: 800px;
  height: 66px;
  padding: 0 18px 0 24px;
  border: solid;
  border-width: 3px 2px;
  border-color: #333635 #3d3d3d #555;
  border-radius: 14px;
  background: #454545;
}
.dots {
  margin-right: 13px;
}
.zoom {
  display: flex;
  align-items: center;
  flex: 1;
  justify-content: space-between;
}
.zoom input {
  appearance: none;
  width: 160px;
  height: 20px;
  margin: 0;
  background: linear-gradient(#e4dfe8, #e4dfe8) 0 9px / 100% 3px no-repeat;
}
.zoom input::-webkit-slider-thumb {
  appearance: none;
  width: 20px;
  height: 20px;
  border-radius: 50%;
  background: #fff;
}
.remark {
  position: absolute;
  color: #ec4126;
  text-align: center;
  white-space: nowrap;
  font: 101px/118px "Liberation Serif", "Times New Roman", serif;
}
.remark p {
  margin: 0;
}
.remark .gap {
  margin-bottom: 21px;
}
.remark.top {
  left: 1304px;
  top: 139px;
}
.remark.low {
  left: 1714px;
  top: 733px;
}
.minimap {
  position: absolute;
  right: 80px;
  bottom: 40px;
  border: 5px solid #c8c8c8a0;
  background: #cccccc59;
  overflow: hidden;
}
.minimap polyline {
  fill: none;
  stroke: #a2c29b;
  stroke-width: 3px;
}
.minimap rect {
  fill: #98ba8e;
}
.bug {
  position: absolute;
  right: 0;
  bottom: 60px;
  justify-content: center;
  width: 82px;
  height: 83px;
  border-radius: 7px 0 0 7px;
  background: #317ff5;
}
</style>
